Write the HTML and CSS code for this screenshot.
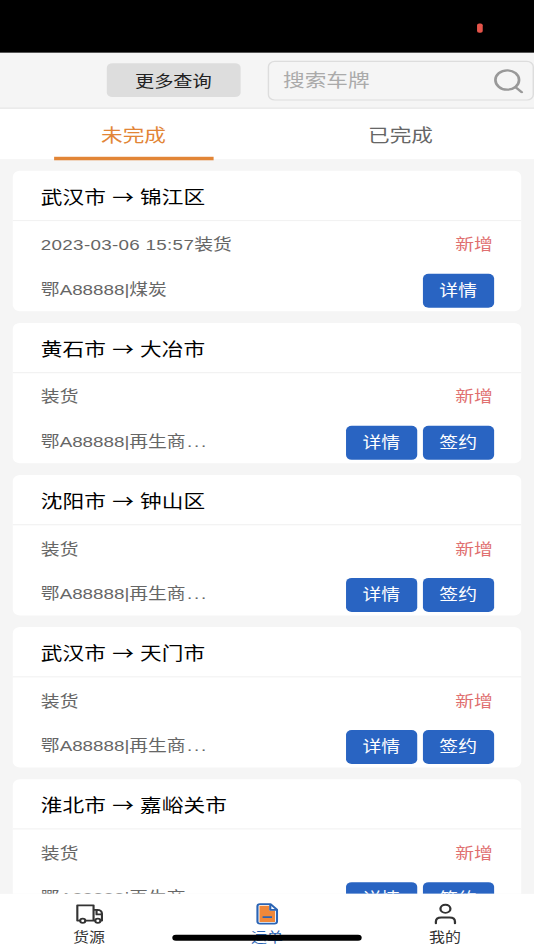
FILE: index.html
```html
<!DOCTYPE html>
<html lang="zh-CN">
<head>
<meta charset="utf-8">
<title>运单</title>
<link rel="stylesheet" href="styles.css">
</head>
<body>
<div class="app">
  <div class="status"><i class="rec"></i></div>
  <header class="toolbar">
    <button class="more">更多查询</button>
    <div class="search">
      <span>搜索车牌</span>
      <svg width="22" height="22" viewBox="0 0 22 22" fill="none" stroke="#999" stroke-width="1.9" stroke-linecap="round"><circle cx="10.2" cy="10.4" r="8.3"/><path d="M16.100 16.600l4.300 4.200"/></svg>
    </div>
  </header>
  <nav class="tabs">
    <div class="tab active">未完成</div>
    <div class="tab">已完成</div>
  </nav>
  <main class="list">
    <article class="card">
      <h2>武汉市 <b>→</b> 锦江区</h2>
      <div class="row"><span><span class="date">2023-03-06 15:57</span>装货</span><em>新增</em></div>
      <div class="row foot"><span>鄂A88888|煤炭</span><div class="actions"><button>详情</button></div></div>
    </article>
    <article class="card">
      <h2>黄石市 <b>→</b> 大冶市</h2>
      <div class="row"><span>装货</span><em>新增</em></div>
      <div class="row foot"><span>鄂A88888|再生商<span class="dots">...</span></span><div class="actions"><button>详情</button><button>签约</button></div></div>
    </article>
    <article class="card">
      <h2>沈阳市 <b>→</b> 钟山区</h2>
      <div class="row"><span>装货</span><em>新增</em></div>
      <div class="row foot"><span>鄂A88888|再生商<span class="dots">...</span></span><div class="actions"><button>详情</button><button>签约</button></div></div>
    </article>
    <article class="card">
      <h2>武汉市 <b>→</b> 天门市</h2>
      <div class="row"><span>装货</span><em>新增</em></div>
      <div class="row foot"><span>鄂A88888|再生商<span class="dots">...</span></span><div class="actions"><button>详情</button><button>签约</button></div></div>
    </article>
    <article class="card">
      <h2>淮北市 <b>→</b> 嘉峪关市</h2>
      <div class="row"><span>装货</span><em>新增</em></div>
      <div class="row foot"><span>鄂A88888|再生商<span class="dots">...</span></span><div class="actions"><button>详情</button><button>签约</button></div></div>
    </article>
  </main>
  <footer class="tabbar">
    <div class="item">
      <svg width="20" height="20" viewBox="0 0 20 20" fill="none" stroke="#333" stroke-width="1.5" stroke-linejoin="round"><path d="M3.300 15.800H1.300V2.800h11.400v13H7M12.700 6.600h2.600c2 0 3.300 1.500 3.300 3.400v5.800h-1.100M12.700 15.800h1.200M14.800 6.800v3.800h3.700"/><circle cx="5.100" cy="16" r="1.800"/><circle cx="15.700" cy="16" r="1.800"/></svg>
      <span>货源</span>
    </div>
    <div class="item current">
      <svg width="20" height="20" viewBox="0 0 20 20" stroke="#2b64b4" stroke-width="1.500" stroke-linejoin="round"><path d="M4.600 1.700h7.400l4.500 4.700v10.300c0 1.100-.7 1.800-1.800 1.800H4.600c-1.100 0-1.800-.7-1.800-1.800V3.500c0-1.100.7-1.800 1.800-1.800z" fill="#fff"/><path d="M4.200 3.200h7v4h3.900v9.800H4.200z" fill="#f0883a" stroke="none"/><path d="M11.800 1.900v4.800h4.700M6.400 13h6.600" fill="none"/></svg>
      <span>运单</span>
    </div>
    <div class="item">
      <svg width="20" height="20" viewBox="0 0 20 20" fill="none" stroke="#333" stroke-width="1.600" stroke-linecap="round"><circle cx="9.800" cy="5.800" r="3.500"/><path d="M3.100 18.100v-1.300c0-2.200 1.500-3.600 3.800-3.600h5.800c2.300 0 3.800 1.400 3.800 3.600v1.300"/></svg>
      <span>我的</span>
    </div>
    <i class="home"></i>
  </footer>
</div>
</body>
</html>
```
FILE: styles.css
```css
* { box-sizing: border-box; }
html, body { margin: 0; width: 534px; height: 950px; overflow: hidden; background: #f5f5f5; }
/* 375x812 layout stretched to fill the window */
.app {
  width: 375px; height: 812px;
  transform: scale(1.424, 1.16995); transform-origin: 0 0;
  display: flex; flex-direction: column; overflow: hidden;
  background: #f5f5f5; color: #666;
  font: 13.200px/18px "Liberation Sans", "Noto Sans CJK SC", sans-serif;
}
button { border: 0; padding: 0; font: inherit; border-radius: 4px; }
.status { flex: none; height: 45px; background: #000; padding: 20px 0 0 335px; }
.rec { display: block; width: 3.700px; height: 8px; border-radius: 1.500px; background: #e5544a; }
.toolbar { flex: none; height: 48px; border-bottom: 1px solid #e4e4e4; display: flex; align-items: center; padding-left: 75px; }
.more { width: 93.500px; height: 28.500px; padding-top: 2px; background: #ddd; color: #222; font-size: 13.500px; }
.search {
  margin-left: 19.300px; width: 187.200px; height: 33.500px; flex: none;
  border: 1px solid #ddd; border-radius: 5px; margin-top: .6px;
  display: flex; align-items: center; justify-content: space-between;
  padding: 0 6px 0 10px; color: #aaa; font-size: 15.200px;
}
.tabs { flex: none; height: 43px; background: #fff; display: flex; }
.tab { width: 50%; text-align: center; font-size: 15.200px; line-height: 46px; height: 43px; }
.tab.active { color: #e28536; }
.tab.active::after { content: ""; display: block; width: 60%; height: 2.800px; margin: -5.200px auto 0; background: #e28536; }
.list { flex: 1; min-height: 0; overflow: hidden; padding: 10.200px 9.200px 0; display: flex; flex-direction: column; gap: 9.900px; }
.card { flex: none; height: 120px; background: #fff; border-radius: 5px; }
h2 { margin: 0; height: 43.300px; border-bottom: 1px solid #f2f2f2; padding-left: 19.500px; font-size: 15.200px; letter-spacing: .08px; font-weight: 400; line-height: 45px; color: #000; }
h2 b { font-family: "Noto Sans CJK SC", sans-serif; font-weight: 400; line-height: 1; }
.row { height: 39px; padding: 2px 19.100px 0 19.500px; display: flex; align-items: center; justify-content: space-between; }
.row.foot { padding-top: 0; }
.date { letter-spacing: .22px; }
.dots { letter-spacing: 1.200px; margin-left: 1px; }
em { font-style: normal; color: #e07070; margin-right: .6px; }
.actions { display: flex; gap: 4px; margin-top: 1.600px; }
.actions button { width: 50px; height: 28.800px; padding-top: .8px; background: #2964c2; color: #fff; }
.tabbar { flex: none; height: 48.300px; background: #fff; display: flex; position: relative; }
.item { flex: 1; display: flex; flex-direction: column; align-items: center; padding-top: 7px; font-size: 11.200px; line-height: 16px; color: #333; }
.item span { margin-top: 2.400px; }
.current { color: #2b64b4; }
.home { position: absolute; left: 120.800px; top: 35.400px; width: 133.600px; height: 5px; border-radius: 3px; background: #000; }
```
